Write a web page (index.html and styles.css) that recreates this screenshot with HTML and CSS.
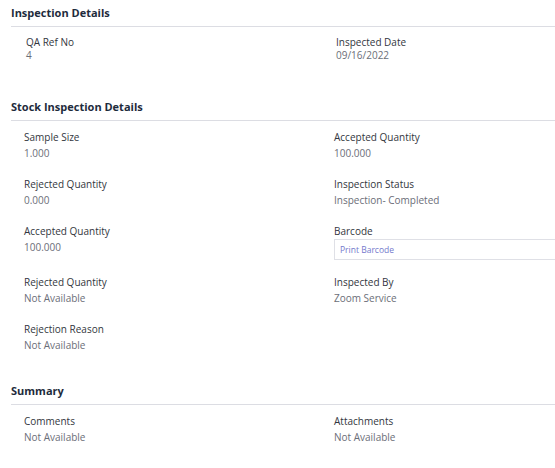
FILE: index.html
```html
<!DOCTYPE html>
<html>
<head>
<meta charset="utf-8">
<link rel="stylesheet" href="styles.css">
</head>
<body>
<div class="page">
  <section class="section">
    <h2 class="section-title">Inspection Details</h2>
    <div class="grid grid-compact">
      <div class="field">
        <div class="label">QA Ref No</div>
        <div class="value">4</div>
      </div>
      <div class="field">
        <div class="label">Inspected Date</div>
        <div class="value">09/16/2022</div>
      </div>
    </div>
  </section>

  <section class="section">
    <h2 class="section-title">Stock Inspection Details</h2>
    <div class="grid">
      <div class="field">
        <div class="label">Sample Size</div>
        <div class="value">1.000</div>
      </div>
      <div class="field">
        <div class="label">Accepted Quantity</div>
        <div class="value">100.000</div>
      </div>
      <div class="field">
        <div class="label">Rejected Quantity</div>
        <div class="value">0.000</div>
      </div>
      <div class="field">
        <div class="label">Inspection Status</div>
        <div class="value">Inspection- Completed</div>
      </div>
      <div class="field">
        <div class="label">Accepted Quantity</div>
        <div class="value">100.000</div>
      </div>
      <div class="field">
        <div class="label">Barcode</div>
        <div class="barcode-box"><a class="barcode-link">Print Barcode</a></div>
      </div>
      <div class="field">
        <div class="label">Rejected Quantity</div>
        <div class="value">Not Available</div>
      </div>
      <div class="field">
        <div class="label">Inspected By</div>
        <div class="value">Zoom Service</div>
      </div>
      <div class="field">
        <div class="label">Rejection Reason</div>
        <div class="value">Not Available</div>
      </div>
    </div>
  </section>

  <section class="section">
    <h2 class="section-title">Summary</h2>
    <div class="grid">
      <div class="field">
        <div class="label">Comments</div>
        <div class="value">Not Available</div>
      </div>
      <div class="field">
        <div class="label">Attachments</div>
        <div class="value">Not Available</div>
      </div>
    </div>
  </section>
</div>
</body>
</html>
```

FILE: styles.css
```css
html, body {
  margin: 0;
  padding: 0;
  background: #ffffff;
  overflow: hidden;
}

body {
  font-family: "Open Sans", "Liberation Sans", sans-serif;
  color: #333640;
}

.page {
  padding: 5px 0 0 11px;
  overflow: hidden;
}

.section {
  margin-bottom: 15px;
}

.section-title {
  margin: 0;
  padding: 0 0 5px;
  font-size: 11px;
  line-height: 16px;
  font-weight: 700;
  color: #1e2b3c;
  border-bottom: 1px solid #dcdde3;
}

.grid {
  display: grid;
  grid-template-columns: 310px 310px;
  padding: 8px 0 0 13px;
}

.field {
  padding-bottom: 14px;
}

.label {
  font-size: 10px;
  line-height: 16px;
  color: #333640;
}

.value {
  font-size: 10px;
  line-height: 17px;
  color: #6b6e78;
}

.grid-compact {
  padding: 9px 0 0 15px;
}

.grid-compact .label,
.grid-compact .value {
  line-height: 13px;
}

.grid-compact .field {
  padding-bottom: 22px;
}

.barcode-box {
  height: 19px;
  border: 1px solid #dfe0e6;
  padding: 0 5px;
  display: flex;
  align-items: center;
}

.barcode-link {
  font-size: 8.5px;
  color: #7479cc;
}
```
